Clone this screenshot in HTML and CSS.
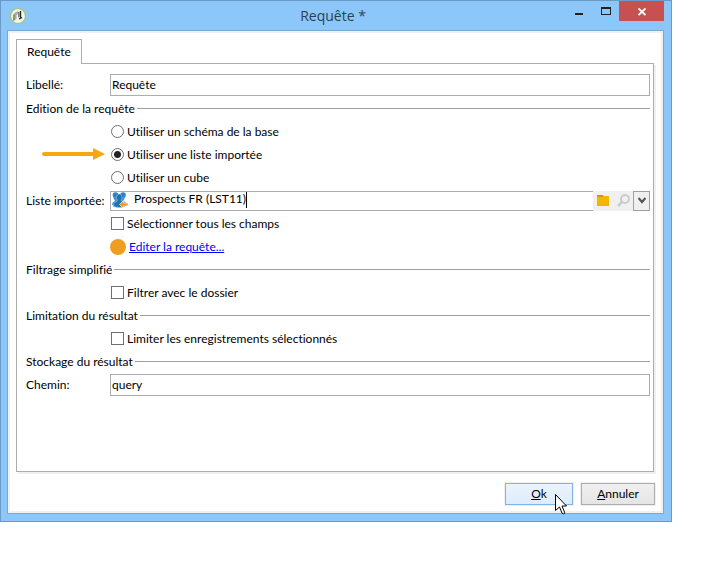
FILE: index.html
```html
<!DOCTYPE html>
<html lang="fr">
<head>
  <meta charset="UTF-8" />
  <meta name="viewport" content="width=device-width, initial-scale=1.0" />
  <title>Requête *</title>
  <link rel="stylesheet" href="styles.css">
</head>
<body>

  <form class="window">
    <header class="titlebar">
      <svg class="app-icon" width="18" height="18" viewBox="0 0 18 18">
        <circle cx="9" cy="9" r="7.5" fill="#f1f3ee" stroke="#a4c860" stroke-width="1.2" />
        <path d="M4 14V8l2-2v7z" fill="#8b918c" />
        <path d="M6 5.500l3-1.500v3L7.500 8v4L6 13z" fill="#a9aea9" />
        <path d="M9 5h1.500v5H9z" fill="#777d78" />
        <path d="M11.500 4v7M13 10.500l-3 1.500" fill="none" stroke="#222" stroke-width="1.300" />
      </svg>
      <h1 class="title">Requête *</h1>
      <div class="window-buttons">
        <button type="button" class="window-button" aria-label="Réduire">
          <svg width="8" height="20" viewBox="0 0 8 20"><path d="M0 12h8v2H0z" fill="#222" /></svg>
        </button>
        <button type="button" class="window-button" aria-label="Agrandir">
          <svg width="10" height="20" viewBox="0 0 10 20"><path d="M0 6h10v8H0zM1 8v5h8V8z" fill="#222" fill-rule="evenodd" /></svg>
        </button>
        <button type="button" class="window-button close" aria-label="Fermer">
          <svg width="8" height="20" viewBox="0 0 8 20"><path d="M.5 7.500l7 6.500M7.500 7.500l-7 6.500" stroke="#fff" stroke-width="1.800" /></svg>
        </button>
      </div>
    </header>

    <main class="client">
      <div class="tabs">
        <button type="button" class="tab">Requête</button>
      </div>

      <section class="panel">
        <div class="row">
          <label class="label" for="libelle">Libellé:</label>
          <input class="field" type="text" id="libelle" value="Requête" />
        </div>

        <div class="row heading">Edition de la requête</div>
        <div class="row indent">
          <input type="radio" name="source" id="schema" />
          <label for="schema">Utiliser un schéma de la base</label>
        </div>
        <div class="row indent">
          <svg class="pointer-arrow" width="63" height="12" viewBox="0 0 63 12">
            <path d="M2 6h52" stroke="#f9a70f" stroke-width="4" stroke-linecap="round" />
            <path d="M51 0l12 6-12 6z" fill="#f9a70f" />
          </svg>
          <input type="radio" name="source" id="liste" checked />
          <label for="liste">Utiliser une liste importée</label>
        </div>
        <div class="row indent">
          <input type="radio" name="source" id="cube" />
          <label for="cube">Utiliser un cube</label>
        </div>
        <div class="row">
          <label class="label" for="import">Liste importée:</label>
          <div class="combo">
            <svg width="18" height="17" viewBox="0 0 18 17">
              <circle cx="4.500" cy="3" r="2.800" fill="#2f83c5" />
              <circle cx="12" cy="3" r="2.800" fill="#2f83c5" />
              <path d="M1 13q0-3 3-4L2 5h12l-1.500 4q3 1 3 4l-4 1H5z" fill="#3f95d3" />
              <path d="M8.200 2q2.800 0 2.800 3.500 0 1.500-1 2.500 0 1.500 2 2 2 .8 2 4.500-6 2-11.500 0 0-3.700 2-4.500 2-.5 2-2-1-1-1-2.500Q5.500 2 8.200 2z" fill="#2170b4" stroke="#8fc0e4" stroke-width=".6" />
              <path d="M8.500 12.500l4-4v2.500H17v3h-4.500v2.500z" fill="#f39a1e" stroke="#fff" stroke-width=".6" />
            </svg>
            <input class="combo-input" type="text" id="import" value="Prospects FR (LST11)" />
            <span class="caret"></span>
            <button type="button" class="tool" aria-label="Parcourir">
              <svg width="12" height="12" viewBox="0 0 12 12">
                <path d="M0 0h6l1 2H0z" fill="#e88b1a" />
                <path d="M0 2h7V1h5v10H0z" fill="#efb900" />
              </svg>
            </button>
            <button type="button" class="tool" aria-label="Rechercher">
              <svg width="13" height="13" viewBox="0 0 13 13">
                <circle cx="8" cy="5" r="4" fill="none" stroke="#ccc" stroke-width="2" />
                <path d="M5 8l-4 4" stroke="#ccc" stroke-width="2.500" />
              </svg>
            </button>
            <button type="button" class="drop" aria-label="Ouvrir la liste">
              <svg width="8" height="7" viewBox="0 0 8 7"><path d="M.5 1L4 5 7.500 1" fill="none" stroke="#555" stroke-width="2.200" /></svg>
            </button>
          </div>
        </div>
        <div class="row indent">
          <input type="checkbox" id="champs" />
          <label for="champs">Sélectionner tous les champs</label>
        </div>
        <div class="row indent">
          <span class="dot"></span>
          <a href="#">Editer la requête...</a>
        </div>

        <div class="row heading">Filtrage simplifié</div>
        <div class="row indent">
          <input type="checkbox" id="dossier" />
          <label for="dossier">Filtrer avec le dossier</label>
        </div>

        <div class="row heading">Limitation du résultat</div>
        <div class="row indent">
          <input type="checkbox" id="limite" />
          <label for="limite">Limiter les enregistrements sélectionnés</label>
        </div>

        <div class="row heading">Stockage du résultat</div>
        <div class="row">
          <label class="label" for="chemin">Chemin:</label>
          <input class="field" type="text" id="chemin" value="query" />
        </div>
      </section>

      <footer class="actions">
        <button type="button" class="button primary"><u>O</u>k
          <svg class="cursor" width="12" height="21" viewBox="0 0 12 21">
            <path d="M.5.500v16l4-3.500 2.500 6q1 1.500 2.500.5.500-.5 0-1.500l-2.500-6h4.500z" fill="#fff" stroke="#000" />
          </svg>
        </button>
        <button type="button" class="button"><u>A</u>nnuler</button>
      </footer>
    </main>
  </form>

</body>
</html>
```
FILE: styles.css
```css
* {
  box-sizing: border-box;
}

body {
  margin: 0;
  background: #fff;
  color: #000;
  font-family: Lato, "Open Sans", sans-serif;
  font-size: 12px;
  font-variant-ligatures: none;
  line-height: 16px;
}

button,
input {
  margin: 0;
  padding: 0;
  font: inherit;
  color: inherit;
}

.window {
  margin-right: 40px;
  padding: 0 7px 7px 6px;
  border: 1px solid #6a9ac6;
  background: #8dc7fa;
}

.titlebar {
  display: flex;
  align-items: center;
  height: 29px;
  padding-left: 2px;
}

.app-icon {
  flex: none;
}

.title {
  flex: 1;
  margin: 0;
  padding-left: 74px;
  color: #2c3e50;
  font-family: "Open Sans", sans-serif;
  font-size: 14px;
  font-weight: 400;
  line-height: 20px;
  text-align: center;
}

.window-buttons {
  display: flex;
  align-self: flex-start;
}

.window-button {
  display: flex;
  justify-content: center;
  width: 27px;
  height: 20px;
  border: 0;
  background: none;
}

.close {
  width: 45px;
  background: #c75050;
}

.client {
  padding: 6px;
  border: 1px solid #74a9d8;
  background: #fff;
  box-shadow: inset 0 0 0 2px #f0f0f0;
}

.tabs {
  display: flex;
  padding: 2px 2px 0;
}

.tab {
  position: relative;
  height: 25px;
  margin-bottom: -1px;
  padding: 0 10px;
  border: 1px solid #acacac;
  border-bottom: 0;
  background: #fff;
}

.panel {
  min-height: 409px;
  margin: 0 3px 0 2px;
  padding: 9px 3px 10px 9px;
  border: 1px solid #acacac;
  box-shadow: 2px 2px 0 #f0f0f0;
}

.row {
  display: flex;
  align-items: center;
  height: 23px;
}

.row:first-child {
  margin-bottom: 1px;
}

.label {
  flex: none;
  width: 84px;
  white-space: nowrap;
}

.field {
  flex: 1;
  min-width: 0;
  height: 22px;
  padding: 0 1px 1px;
  border: 1px solid #abadb3;
  background: #fff;
}

.heading {
  gap: 2px;
}

.heading::after {
  content: "";
  flex: 1;
  height: 1px;
  background: #a0a0a0;
}

.indent {
  position: relative;
  gap: 3px;
  padding-left: 85px;
}

input[type="radio"],
input[type="checkbox"] {
  appearance: none;
  flex: none;
  width: 13px;
  height: 13px;
  border: 1px solid #707070;
  background: #fff;
}

input[type="radio"] {
  border-radius: 50%;
}

input[type="radio"]:checked {
  background: radial-gradient(circle, #222 3px, #fff 4px);
}

.pointer-arrow {
  position: absolute;
  left: 16px;
  top: 5px;
}

.combo {
  display: flex;
  flex: 1;
  height: 20px;
  min-width: 0;
  border: 1px solid #abadb3;
  border-right: 0;
}

.combo svg {
  flex: none;
}

.combo-input {
  width: 113px;
  height: 15px;
  margin-left: 5px;
  margin-right: -4px;
  border: 0;
  background: none;
}

.caret {
  width: 1px;
  height: 16px;
  margin-left: 3px;
  margin-right: auto;
  background: #000;
}

.tool,
.drop {
  display: flex;
  align-items: center;
  justify-content: center;
  width: 20px;
  margin: -1px 0;
  border: 0;
  background: #f0f0f0;
}

.drop {
  width: 17px;
  border: 1px solid #a0a0a0;
}

.dot {
  width: 16px;
  height: 16px;
  margin-left: -1px;
  border-radius: 50%;
  background: #ee9f20;
}

a {
  color: #00f;
}

.actions {
  display: flex;
  justify-content: flex-end;
  gap: 8px;
  padding: 11px 2px 2px;
}

.button {
  position: relative;
  min-width: 74px;
  height: 22px;
  border: 1px solid #acacac;
  background: linear-gradient(#f0f0f0, #e5e5e5);
  box-shadow: 0 0 0 1px #f0f0f0;
}

.primary {
  min-width: 68px;
  border-color: #7eb4ea;
  background: linear-gradient(#ecf4fc, #dcecfc);
}

.cursor {
  position: absolute;
  left: 49px;
  top: 10px;
}
```
